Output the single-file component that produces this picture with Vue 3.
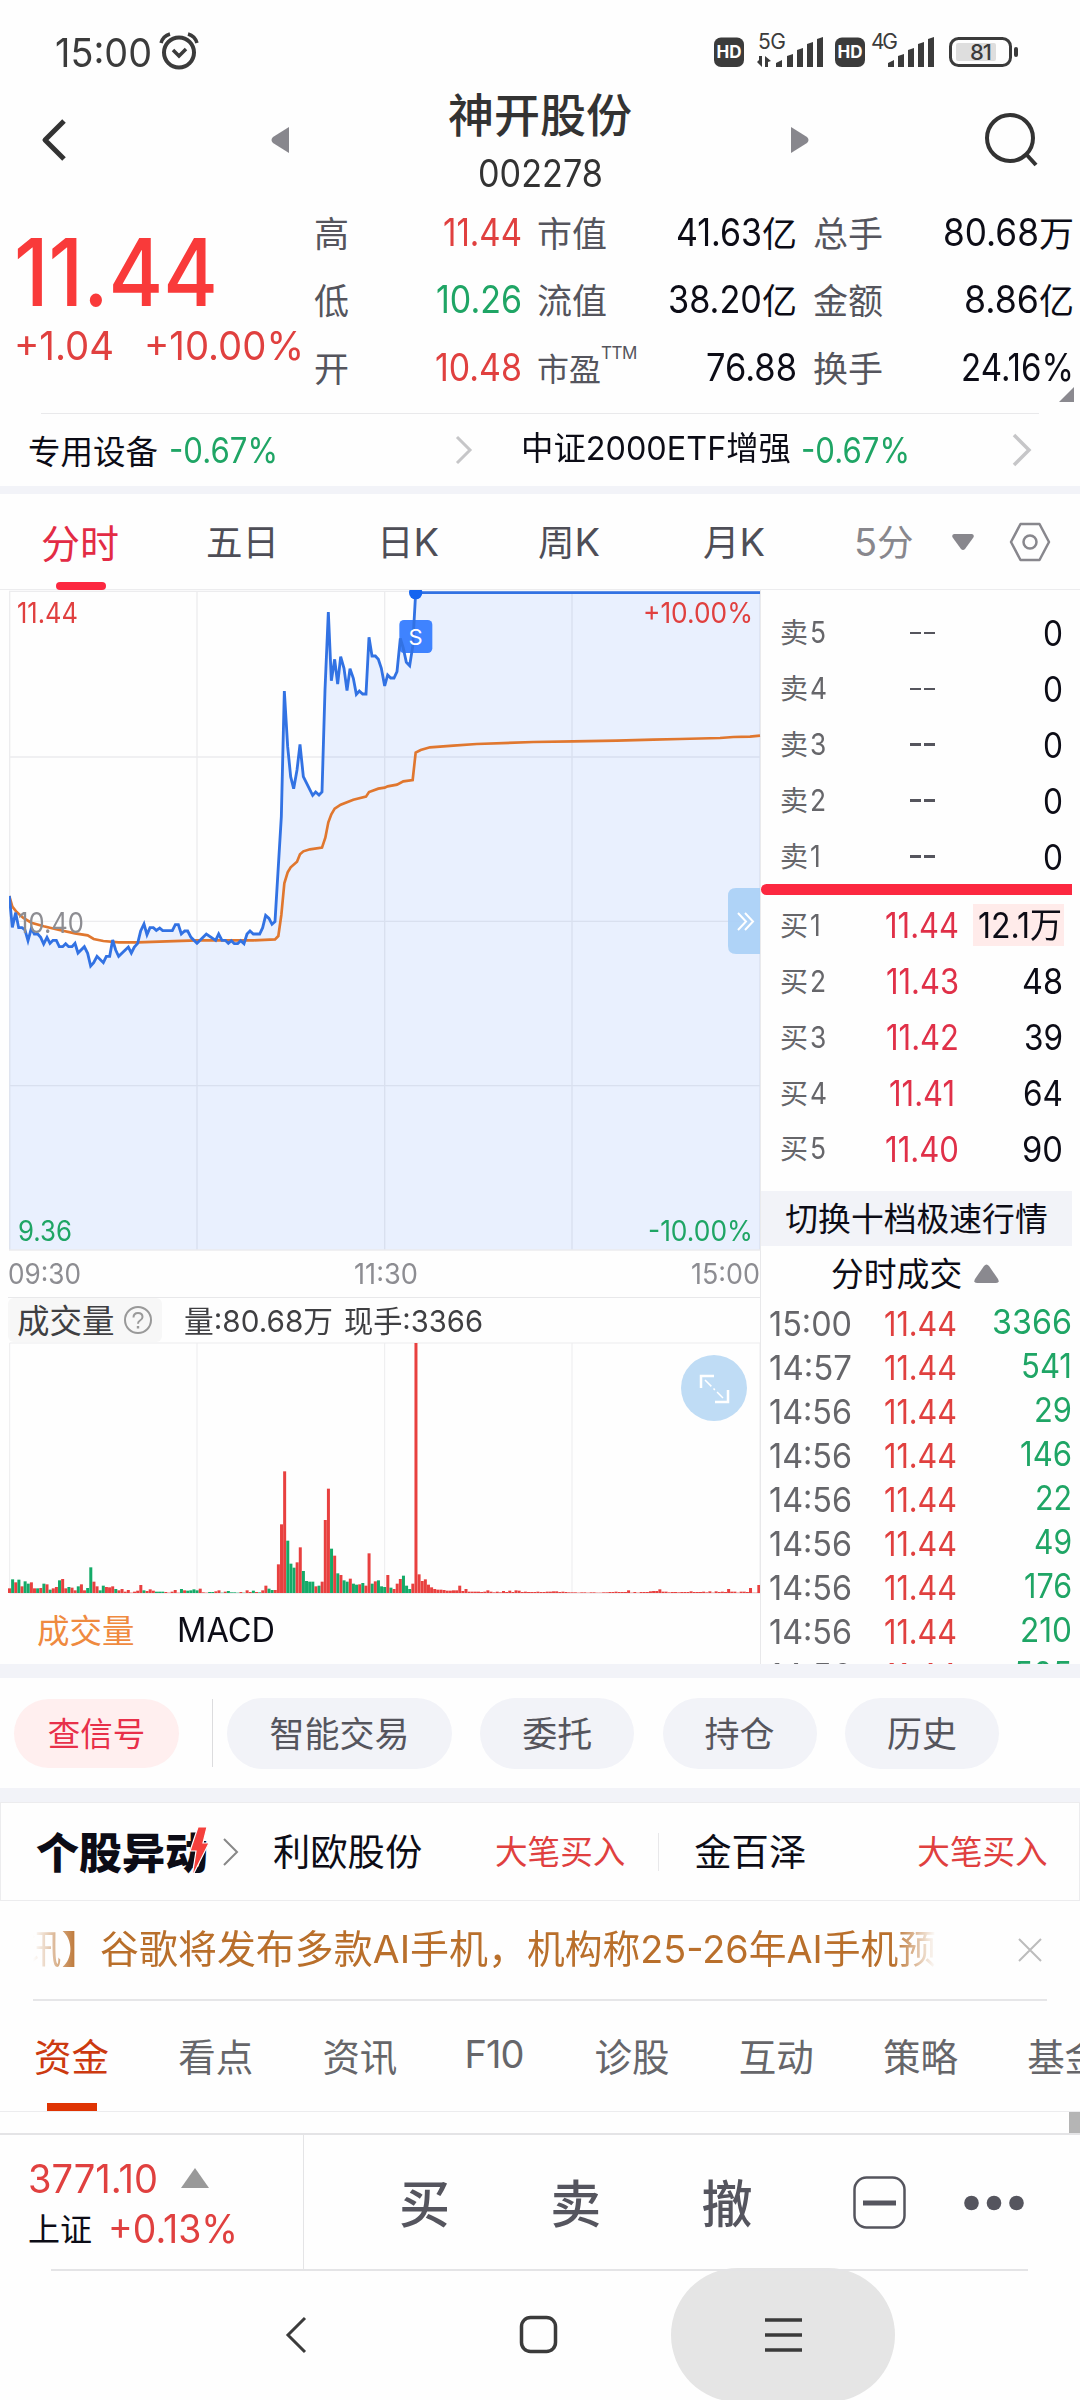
<script setup>
// Scales a label horizontally so that it takes exactly the given width in its row.
const vFit = {
  mounted(el, { value }) {
    const natural = el.getBoundingClientRect().width
    el.style.transform = `scaleX(${value / natural})`
    el.style.marginRight = `${value - natural}px`
  },
}

const stats = [
  ['高', '11.44', 'red', 79, '市值', '41.63', '亿', 86, '总手', '80.68', '万', 96],
  ['低', '10.26', 'green', 86, '流值', '38.20', '亿', 94, '金额', '8.86', '亿', 75],
  ['开', '10.48', 'red', 87, '市盈', '76.88', '', 91, '换手', '24.16%', '', 113],
]

const sells = ['卖5', '卖4', '卖3', '卖2', '卖1']
const buys = [
  ['买1', '11.44', 74, '12.1万', 84],
  ['买2', '11.43', 73, '48', 41],
  ['买3', '11.42', 73, '39', 39],
  ['买4', '11.41', 66, '64', 40],
  ['买5', '11.40', 74, '90', 41],
]
const trades = [
  ['15:00', '3366', 80],
  ['14:57', '541', 51],
  ['14:56', '29', 38],
  ['14:56', '146', 52],
  ['14:56', '22', 37],
  ['14:56', '49', 38],
  ['14:56', '176', 48],
  ['14:56', '210', 52],
  ['14:56', '505', 58],
]

const price =
  '28,948 37,1042 47,998 56,1043 66,1043 75,1050 84,1082 94,1045 103,1062 113,1062 122,1072 131,1092 141,1072 150,1090 159,1081 169,1081 178,1100 188,1100 197,1091 206,1100 216,1100 225,1090 234,1119 253,1100 263,1120 272,1158 281,1148 291,1129 310,1148 319,1129 329,1129 338,1080 347,1110 356,1129 385,1101 394,1119 403,1101 413,1090 422,1053 432,1032 441,1064 450,1043 460,1043 469,1051 479,1044 488,1052 517,1052 526,1034 535,1034 544,1062 554,1053 563,1053 573,1072 591,1090 619,1062 647,1081 656,1062 666,1081 676,1081 685,1090 694,1082 703,1091 713,1091 722,1082 732,1091 741,1062 750,1053 760,1062 779,1062 788,1043 797,1006 807,1015 816,1033 825,1025 844,710 853,333 863,500 872,590 881,626 891,570 900,493 910,590 938,646 947,636 957,645 966,636 975,330 985,96 994,302 1004,238 1013,312 1022,230 1032,265 1041,332 1050,266 1060,295 1069,343 1078,333 1088,342 1098,342 1107,172 1116,228 1126,228 1135,238 1144,265 1154,318 1163,285 1172,294 1182,294 1191,275 1201,175 1210,205 1219,247 1229,257 1238,200 1247,38 2280,38'
const average =
  '28,948 37,980 50,996 70,1014 94,1028 131,1039 178,1050 225,1060 263,1066 281,1077 310,1083 356,1087 413,1087 500,1084 591,1081 760,1081 825,1078 835,1068 844,1005 853,910 863,877 872,862 891,845 900,823 910,814 930,808 966,803 976,773 985,727 994,703 1004,686 1022,674 1060,659 1098,650 1107,636 1135,626 1154,623 1163,619 1191,614 1210,604 1238,600 1247,518 1262,510 1290,502 1360,497 1430,492 1600,486 1720,484 1850,482 1960,479 2040,477 2160,474 2200,471 2250,470 2280,467'

// One entry per minute: r = rising, g = falling, then the bar height.
const volume = (
  'r14 g41 r32 g40 r20 g35 g28 r32 r14 g14 r15 g28 r26 g10 r14 r18 g38 r42 r14 g18 r16 r8 g20 r26 r8 g15 g77 r34 r20 g8 g22 r18 r17 r20 g12 r8 r12 r4 r9 r1 r4 r7 r24 g8 r6 r11 r7 g4 g4 g4 ' +
  'r3 r1 r4 r9 r1 g12 r8 g7 g8 g11 g8 r13 r2 r1 g3 g3 r5 r8 g1 r4 g6 g2 g2 g1 r3 g1 r8 r3 g7 r3 g2 r8 r22 g13 g9 r9 r86 r206 r365 g157 g88 g76 r92 r137 g66 g36 g34 g34 r20 g22 ' +
  'r34 r219 r313 g133 r112 g59 r54 g38 g34 r43 g28 g25 r26 g30 r22 r119 g28 r35 g38 g20 g18 r54 g16 r12 r28 r42 g52 g22 g12 r28 r750 r56 r36 r41 r25 r17 r12 r10 r10 r9 r7 r7 r8 r8 r22 r6 r12 r4 r4 r4 ' +
  'r4 r3 r4 r8 r4 r2 r4 r2 r6 r3 r7 r3 r8 r7 r3 r4 r3 r3 r3 r4 r3 r3 r4 r4 r5 r5 r3 r4 r3 r2 r2 r2 r1 r2 r2 r1 r2 r2 r1 r1 r2 r2 r3 r3 r4 r3 r3 r3 r8 r1 ' +
  'r3 r1 r3 r3 r3 r5 r6 r6 r11 r4 r4 r2 r3 r3 r2 r3 r3 r3 r5 r3 r3 r3 r4 r2 r5 r1 r5 r3 r4 r3 r12 r4 r4 r1 r4 r4 r3 r15 r1 r1 r24'
)
  .split(' ')
  .map((s, i, all) => ({
    x: i === all.length - 1 ? 2272 : 24 + i * 9.38,
    h: Number(s.slice(1)),
    fill: s[0] === 'r' ? '#e8403f' : '#14aa68',
  }))
</script>

<template>
  <div class="screen">
    <div class="status">
      <span class="n clock" v-fit="97">15:00</span>
      <svg class="alarm" width="42" height="40" viewBox="0 0 42 40" fill="none" stroke="#3b3b3b">
        <circle cx="21" cy="21.500" r="15" stroke-width="4" />
        <path d="M3 12Q5 5 12 3M39 12Q37 5 30 3" stroke-width="3.500" />
        <path d="M15 19l6 6 7-7" stroke-width="3.500" />
      </svg>
      <svg width="306" height="56" viewBox="713 24 306 56" fill="#3b3b3b">
        <rect x="714" y="37.500" width="30" height="29.500" rx="7" />
        <text x="729" y="58" class="hd">HD</text>
        <text x="758" y="48.500" class="gen" textLength="28">5G</text>
        <path d="M759 56h3v11l-5-5 2-2zM768 67h-3V56l6 5-3 1z" />
        <path d="M776 63l6-3v7h-6zM787 56l6-2v13h-6zM797 50l6-2v19h-6zM807 44l6-2v25h-6zM817 39l6-2v30h-6z" />
        <rect x="835" y="37.500" width="30" height="29.500" rx="7" />
        <text x="850" y="58" class="hd">HD</text>
        <text x="871" y="48.500" class="gen" textLength="27">4G</text>
        <path d="M888 63l6-3v7h-6zM898 56l6-2v13h-6zM908 50l6-2v19h-6zM918 44l6-2v25h-6zM928 39l6-2v30h-6z" />
        <rect x="950.500" y="38.500" width="60" height="27" rx="8" fill="none" stroke="#3b3b3b" stroke-width="3" />
        <rect x="956" y="43" width="40" height="18" rx="2" fill="#dedede" />
        <text x="980.500" y="60" class="pct">81</text>
        <rect x="1014" y="47" width="4" height="10" rx="2" />
      </svg>
    </div>

    <header class="header">
      <svg width="30" height="44" viewBox="0 0 30 44" fill="none" stroke="#333" stroke-width="5"><path d="M25 3L6 22l19 19" stroke-linejoin="round" /></svg>
      <svg class="prev" width="18" height="26" viewBox="0 0 18 26"><path d="M18 0v26L2 16q-3-3 0-6z" fill="#88878d" /></svg>
      <div class="title">
        <h1>神开股份</h1>
        <span class="n" v-fit="125">002278</span>
      </div>
      <svg class="next" width="18" height="26" viewBox="0 0 18 26"><path d="M0 0v26l16-10q3-3 0-6z" fill="#88878d" /></svg>
      <svg class="search" width="54" height="54" viewBox="0 0 54 54" fill="none" stroke="#333" stroke-width="4"><circle cx="26" cy="25" r="23" /><path d="M42 41l10 11" /></svg>
    </header>

    <section class="quote">
      <div class="last">
        <div class="n big" v-fit="204">11.44</div>
        <div class="chg"><span class="n" v-fit="100">+1.04</span><span class="n pctv" v-fit="160">+10.00%</span></div>
      </div>
      <div class="stats">
        <div v-for="s in stats" :key="s[0]" class="stat">
          <span class="lab l1">{{ s[0] }}</span>
          <span class="val v1" :class="s[2]"><span class="n" v-fit="s[3]">{{ s[1] }}</span></span>
          <span class="lab l2" :class="{ pe: s[0] === '开' }">{{ s[4] }}<sup v-if="s[0] === '开'" class="n">TTM</sup></span>
          <span class="val v2"><span class="n" v-fit="s[7]">{{ s[5] }}</span><i v-if="s[6]">{{ s[6] }}</i></span>
          <span class="lab l3">{{ s[8] }}</span>
          <span class="val v3"><span class="n" v-fit="s[11]">{{ s[9] }}</span><i v-if="s[10]">{{ s[10] }}</i></span>
        </div>
      </div>
    </section>
    <div class="corner"><svg width="15" height="15"><path d="M15 0v15H0z" fill="#8a898f" /></svg></div>

    <div class="sectors">
      <span class="name">专用设备</span>
      <span class="n green d1" v-fit="109">-0.67%</span>
      <svg class="c1" width="18" height="30" viewBox="0 0 18 30" fill="none" stroke="#c6c6c8" stroke-width="3"><path d="M2 2l13 13L2 28" /></svg>
      <span class="name"><span v-fit="270">中证2000ETF增强</span></span>
      <span class="n green d2" v-fit="109">-0.67%</span>
      <svg class="c2" width="20" height="34" viewBox="0 0 20 34" fill="none" stroke="#c6c6c8" stroke-width="3.500"><path d="M2 2l15 15L2 32" /></svg>
    </div>
    <div class="band b8"></div>

    <nav class="periods">
      <span class="p on">分时</span>
      <span class="p">五日</span>
      <span class="p">日<b>K</b></span>
      <span class="p">周<b>K</b></span>
      <span class="p">月<b>K</b></span>
      <span class="p dim"><b>5</b>分</span>
      <svg class="down" width="22" height="16" viewBox="0 0 22 16"><path d="M2 0h18q3 1 1 4l-8 11q-2 2-4 0L1 4Q-1 1 2 0z" fill="#88878d" /></svg>
      <svg class="hex" width="42" height="40" viewBox="0 0 42 40" fill="none" stroke="#88878d" stroke-width="2.500" stroke-linejoin="round"><path d="M11.500 2h19L40 20l-9.500 18h-19L2 20z" /><circle cx="21" cy="20" r="6.500" /></svg>
    </nav>

    <main class="board">
      <div class="charts">
        <div class="plot">
          <svg width="752" height="661" viewBox="27 30 2256 1983">
            <g stroke="#ececee" stroke-width="4" fill="none">
              <path d="M29 34H2280V2010H29z" />
              <path d="M591 34V2010M1154 34V2010M1716 34V2010M28 531H2280M28 1024H2280M28 1517H2280" />
            </g>
            <polygon :points="`${price} 2280,2008 28,2008`" fill="#3c82ff" fill-opacity="0.11" />
            <polyline :points="average" fill="none" stroke="#e0772f" stroke-width="8" />
            <rect x="1198" y="120" width="99" height="99" rx="14" fill="#3f83ff" />
            <polyline :points="price" fill="none" stroke="#3272e3" stroke-width="8.500" />
            <circle cx="1247" cy="38" r="20" fill="#1565f0" />
            <text x="1247" y="194" class="smark">S</text>
          </svg>
          <span class="tag tl red"><span class="n" v-fit="61">11.44</span></span>
          <span class="tag tr red"><span class="n" v-fit="110">+10.00%</span></span>
          <span class="tag ml"><span class="n" v-fit="66">10.40</span></span>
          <span class="tag bl green"><span class="n" v-fit="54">9.36</span></span>
          <span class="tag br green"><span class="n" v-fit="105">-10.00%</span></span>
          <svg class="fold" width="32" height="66" viewBox="0 0 32 66"><path d="M32 0H8Q0 0 0 8v50q0 8 8 8h24z" fill="#a9cff6" fill-opacity=".9" /><path d="M10 25l8 8.500-8 8.500M17 25l8 8.500-8 8.500" fill="none" stroke="#fff" stroke-width="2" /></svg>
        </div>
        <div class="times"><span class="n" v-fit="73">09:30</span><span class="n" v-fit="64">11:30</span><span class="n" v-fit="69">15:00</span></div>
        <div class="volhead">
          <span class="volname"><em>成交量</em>
            <svg width="28" height="28" viewBox="0 0 28 28" fill="none" stroke="#999"><circle cx="14" cy="14" r="13" stroke-width="2" /><path d="M9.500 11.500q0-4.500 4.500-4.500t4.500 4q0 2-2.500 3.500-2 1.200-2 3.200" stroke-width="2" /><path d="M14 20v2.500" stroke-width="2.400" /></svg>
          </span>
          <span class="voltext" v-fit="149">量:80.68万</span>
          <span class="voltext vt2" v-fit="139">现手:3366</span>
        </div>
        <div class="volume">
          <svg width="752" height="252" viewBox="24 428 2256 756">
            <path d="M29 431H2280M29 431V1182H2280V431M591 431V1182M1154 431V1182M1716 431V1182" stroke="#ececee" stroke-width="3" fill="none" />
            <rect v-for="(b, i) in volume" :key="i" :x="b.x" :y="1181 - b.h" width="9" :height="b.h" :fill="b.fill" />
          </svg>
          <svg class="expand" width="66" height="66" viewBox="0 0 66 66"><circle cx="33" cy="33" r="33" fill="#bfdcf5" /><path d="M20 33V21h13M47 35v12H34" fill="none" stroke="#fff" stroke-width="2.500" /><path d="M24 25l18 18" stroke="#fff" stroke-width="1.500" stroke-dasharray="9 3 2 3" /></svg>
        </div>
        <div class="inds"><span class="on">成交量</span><span class="n" v-fit="98">MACD</span></div>
      </div>

      <aside class="book">
        <div v-for="s in sells" :key="s" class="lv">
          <span class="k">{{ s[0] }}<b>{{ s[1] }}</b></span>
          <span class="dash"><i></i><i></i></span>
          <span class="q"><span class="n" v-fit="20">0</span></span>
        </div>
        <div class="mid"></div>
        <div v-for="b in buys" :key="b[0]" class="lv">
          <span class="k">{{ b[0][0] }}<b>{{ b[0][1] }}</b></span>
          <span class="pr"><span class="n" v-fit="b[2]">{{ b[1] }}</span></span>
          <span class="q" :class="{ hot: b[0] === '买1' }"><span class="n" v-fit="b[4]">{{ b[3] }}</span></span>
        </div>
        <div class="switch">切换十档极速行情</div>
        <div class="tickhead">分时成交<svg width="25" height="19" viewBox="0 0 25 19"><path d="M10 2q2.500-3 5 0l9 13q2 4-2 4H3q-4 0-2-4z" fill="#8a898f" /></svg></div>
        <div class="ticks">
          <div v-for="(t, i) in trades" :key="i" class="tick">
            <span class="tm"><span class="n" v-fit="83">{{ t[0] }}</span></span>
            <span class="tp"><span class="n" v-fit="73">11.44</span></span>
            <span class="tv"><span class="n" v-fit="t[2]">{{ t[1] }}</span></span>
          </div>
        </div>
      </aside>
    </main>
    <div class="band b14"></div>

    <div class="actions">
      <span class="pill hotpill">查信号</span>
      <i class="sep"></i>
      <span class="pill wide">智能交易</span>
      <span class="pill">委托</span>
      <span class="pill">持仓</span>
      <span class="pill">历史</span>
    </div>
    <div class="band b14"></div>

    <div class="moves">
      <span class="logo"><span v-fit="172">个股异动</span>
        <svg class="bolt" width="20" height="50" viewBox="0 0 20 50"><path d="M9 0h9l-4 16h6L3 50l4-26H1z" fill="#f5403c" stroke="#fff" stroke-width="1.200" /></svg>
      </span>
      <svg class="mchev" width="16" height="28" viewBox="0 0 16 28" fill="none" stroke="#888" stroke-width="2"><path d="M1 1l13 13L1 27" /></svg>
      <span class="stock s1">利欧股份</span><span class="kind">大笔买入</span>
      <i class="vline"></i>
      <span class="stock s2">金百泽</span><span class="kind">大笔买入</span>
    </div>

    <div class="news">
      <div class="marquee"><span class="cut">讯】</span><span v-fit="427">谷歌将发布多款AI手机，</span><span v-fit="409">机构称25-26年AI手机预</span></div>
      <svg width="24" height="24" viewBox="0 0 24 24" stroke="#bcbcbc" stroke-width="2"><path d="M1 1l22 22M23 1L1 23" /></svg>
    </div>

    <nav class="infotabs">
      <span class="on">资金</span><span>看点</span><span>资讯</span><span class="n f10">F10</span><span>诊股</span><span>互动</span><span>策略</span><span>基金</span>
    </nav>
    <div class="peek"><i></i></div>

    <footer class="trade">
      <div class="index">
        <div><span class="n red" v-fit="130">3771.10</span><svg width="28" height="20"><path d="M14 0l14 20H0z" fill="#999" /></svg></div>
        <div><span class="iname">上证</span><span class="n red" v-fit="130">+0.13%</span></div>
      </div>
      <span class="op">买</span><span class="op">卖</span><span class="op">撤</span>
      <svg class="box" width="54" height="54" viewBox="0 0 54 54" fill="none" stroke="#55555e"><rect x="1.500" y="1.500" width="50" height="50" rx="12" stroke-width="2.500" /><path d="M10 27h33" stroke-width="5" /></svg>
      <svg class="dots" width="60" height="16" fill="#55555e"><circle cx="7.500" cy="8" r="7.300" /><circle cx="30" cy="8" r="7.300" /><circle cx="52.500" cy="8" r="7.300" /></svg>
    </footer>

    <div class="sysnav">
      <svg class="nb" width="22" height="38" viewBox="0 0 22 38" fill="none" stroke="#3b3b3b" stroke-width="3"><path d="M20 2L3 19l17 17" /></svg>
      <svg class="nh" width="40" height="40" viewBox="0 0 40 40" fill="none" stroke="#3b3b3b" stroke-width="3.500"><rect x="2.500" y="2.500" width="34" height="34" rx="9" /></svg>
      <div class="recent"><svg width="37" height="36" stroke="#3b3b3b" stroke-width="3.500"><path d="M0 3h37M0 18h37M0 33h37" /></svg></div>
    </div>
  </div>
</template>

<style>
body { background: #fff; }
</style>

<style scoped>
.screen { width: 1080px; height: 2400px; background: #fefefe; overflow: hidden; font-family: 'Noto Sans CJK SC', sans-serif; color: #0c0c16; display: flex; flex-direction: column; box-sizing: border-box; }
.screen > * { flex: none; }
.n { font-family: Inter, sans-serif; }
span { display: inline-block; white-space: nowrap; transform-origin: left center; }
i, em { font-style: normal; }
b { font-weight: 400; font-family: Inter, 'Noto Sans CJK SC', sans-serif; display: inline-block; }
svg { display: block; flex: none; }
.red { color: #e0403f; }
.green { color: #1fa565; }

.status { height: 104px; display: flex; align-items: center; padding-left: 55px; box-sizing: border-box; color: #3b3b3b; }
.clock { font-size: 39px; }
.alarm { margin: -2px 513px 0 6px; }
.hd { font: 700 17px Inter, sans-serif; fill: #fff; text-anchor: middle; }
.gen { font: 400 21px Inter, sans-serif; }
.pct { font: 500 22px Inter, sans-serif; text-anchor: middle; letter-spacing: -1px; }

.header { height: 96px; margin-top: -12px; display: flex; align-items: center; padding: 0 41px 0 39px; color: #333; }
.prev { margin-left: 202px; }
.title { width: 502px; display: flex; flex-direction: column; align-items: center; padding-top: 5px; }
.title h1 { margin: 0; font-size: 46px; font-weight: 500; line-height: 50px; }
.title span { font-size: 38px; line-height: 50px; margin: 11px 2px 0 0; }
.search { margin-left: 175px; }

.quote { height: 206px; display: flex; margin-top: 11px; }
.last { width: 315px; padding: 26px 0 0 14px; box-sizing: border-box; }
.big { display: inline-block; transform-origin: left center; font-size: 93px; font-weight: 500; line-height: 94px; color: #f93a3a; }
.chg { display: flex; color: #e0403f; font-size: 40px; line-height: 48px; margin-top: 3px; }
.pctv { margin-left: 30px; }
.stats { flex: 1; margin: -1px 0 0 -1px; }
.stat { height: 67.500px; display: flex; align-items: center; font-size: 35px; line-height: 60px; }
.lab { color: #55555d; }
.l1 { width: 56px; }
.l2 { width: 112px; margin-left: 15px; }
.pe { font-size: 32px; }
.l3 { width: 100px; margin-left: 16px; }
.val { display: flex; justify-content: flex-end; align-items: center; }
.val .n { font-size: 38px; line-height: 60px; }
.v1 { width: 152px; }
.v2 { width: 148px; }
.v3 { width: 161px; }
.l2 sup { font-size: 17px; line-height: 18px; vertical-align: 22px; letter-spacing: -.5px; }
.corner { height: 15px; display: flex; padding-left: 1059px; margin-top: -18px; margin-bottom: 5px; }

.sectors { height: 72px; margin: 6px 41px 0; border-top: 1px solid #e9e9eb; display: flex; align-items: center; font-size: 32.500px; }
.name { margin-left: -13px; line-height: 50px; padding-bottom: 1px; }
.d1, .d2 { font-size: 35px; }
.d1 { margin-left: 11px; }
.c1 { margin: 0 0 0 177px; }
.c1 + .name { margin-left: 48px; font-family: Inter, 'Noto Sans CJK SC', sans-serif; padding-bottom: 2px; }
.d2 { margin-left: 10px; }
.c2 { margin-left: 102px; }
.band { background: #f2f3f8; }
.b8 { height: 8px; }
.b14 { height: 14px; }

.periods { height: 96px; box-sizing: border-box; display: flex; align-items: center; padding-left: 41px; font-size: 36.500px; color: #4e4e57; }
.p { position: relative; line-height: 58px; padding-bottom: 2px; width: 165px; }
.p b { font-size: 38px; line-height: 58px; }
.periods .p:nth-child(2) { width: 171px; }
.periods .p:nth-child(3) { width: 161px; }
.periods .p:nth-child(5) { width: 151px; }
.p.on { color: #e32b45; font-size: 39px; }
.p.on::after { content: ''; position: absolute; left: 15px; bottom: -18px; width: 50px; height: 8px; border-radius: 4px; background: #fc2840; }
.p.dim { width: 98px; color: #88878d; }
.hex { margin-left: 35px; }

.board { height: 1075px; display: flex; border-top: 1px solid #ececee; margin-top: -1px; box-sizing: border-box; overflow: hidden; }
.charts { width: 761px; border-right: 1px solid #e8e8ea; box-sizing: border-box; }
.plot { position: relative; padding-left: 9px; height: 661px; }
.smark { font: 400 66px Inter, sans-serif; fill: #fff; text-anchor: middle; }
.tag { position: absolute; font-size: 28px; line-height: 34px; }
.tl { left: 17px; top: 4px; }
.tr { right: 7px; top: 4px; }
.ml { left: 18px; top: 314px; color: #8d8d92; }
.bl { left: 18px; top: 622px; }
.br { right: 7px; top: 622px; }
.fold { position: absolute; right: 0; top: 298px; }
.times { display: flex; justify-content: space-between; padding: 0 0 0 8px; height: 46px; align-items: center; font-size: 28px; color: #8d8d92; }
.volhead { height: 45px; margin-left: 8px; border-top: 1px solid #e8e8ea; display: flex; align-items: center; color: #3f3f42; box-sizing: border-box; }
.volname { display: flex; align-items: center; width: 154px; height: 44px; box-sizing: border-box; padding-left: 9px; background: #f7f7f7; border-radius: 6px; font-size: 32.500px; line-height: 42px; }
.volname em { padding-bottom: 2px; }
.volname svg { margin-left: 9px; }
.voltext { margin-left: 22px; font-size: 30px; font-family: Inter, 'Noto Sans CJK SC', sans-serif; padding-bottom: 3px; }
.vt2 { margin-left: 11px; }
.volume { position: relative; padding-left: 8px; height: 252px; }
.expand { position: absolute; left: 681px; top: 13px; }
.inds { display: flex; align-items: center; height: 70px; padding-left: 37px; font-size: 32.500px; }
.inds .on { color: #ef8a3f; margin-right: 42px; padding-bottom: 2px; }
.inds .n { font-size: 34px; }

.book { width: 311px; padding-top: 15px; }
.lv { height: 55.900px; display: flex; align-items: center; position: relative; }
.k { width: 86px; margin-left: 19px; font-size: 28px; color: #66666a; line-height: 48px; padding-bottom: 2px; }
.k b { font-size: 30px; margin-left: 2px; transform: scaleX(.88); transform-origin: left; }
.dash { width: 112px; display: flex; justify-content: center; gap: 3px; }
.dash i { width: 11px; height: 2.500px; background: #55555d; }
.pr { width: 112px; color: #e03048; font-size: 35px; display: flex; justify-content: center; }
.q { width: 85px; display: flex; justify-content: flex-end; font-size: 35px; }
.q .n { font-family: Inter, 'Noto Sans CJK SC', sans-serif; line-height: 42px; }
.hot { background: #ffebea; width: 91px; margin-left: -5px; padding-right: 2px; box-sizing: border-box; }
.mid { height: 11px; border-radius: 6px 0 0 6px; background: #fc2840; margin-bottom: 2px; }
.switch { height: 55px; box-sizing: border-box; padding-bottom: 3px; margin-top: 14px; background: #f2f3f8; display: flex; align-items: center; justify-content: center; font-size: 32.800px; }
.tickhead { height: 54px; box-sizing: border-box; padding-bottom: 2px; display: flex; align-items: center; padding-left: 70px; font-size: 32.800px; }
.tickhead svg { margin: 3px 0 0 12px; }
.ticks { height: 400px; overflow: hidden; }
.tick { height: 43.950px; display: flex; align-items: center; font-size: 34px; }
.tm { width: 115px; margin-left: 8px; color: #66666a; }
.tp { width: 80px; color: #e0403f; }
.tv { width: 108px; display: flex; justify-content: flex-end; color: #1fa565; }

.actions { height: 110px; display: flex; align-items: center; padding-left: 14px; }
.pill { height: 71px; box-sizing: border-box; border-radius: 36px; background: #f2f3f8; color: #55555d; font-size: 35px; line-height: 68px; width: 154px; text-align: center; margin-right: 28.300px; }
.wide { width: 225px; }
.hotpill { width: 165px; height: 69px; line-height: 66px; background: #ffefef; color: #e8304a; font-size: 32.500px; margin-right: 33px; }
.sep { width: 1px; height: 68px; background: #dcdcde; margin-right: 14px; }

.moves { height: 99px; border: 1px solid #ececee; box-sizing: border-box; display: flex; align-items: center; padding-left: 35px; }
.logo { position: relative; font-size: 43px; font-weight: 900; line-height: 56px; padding-bottom: 3px; width: 174px; }
.bolt { position: absolute; right: 1px; top: 5px; }
.mchev { margin-left: 13px; }
.stock { font-size: 37.300px; line-height: 58px; padding-bottom: 3px; }
.s1 { margin-left: 34px; width: 222px; }
.s2 { margin-left: 35px; width: 223px; }
.kind { font-size: 32.600px; color: #e0403f; line-height: 58px; padding-bottom: 3px; }
.vline { width: 1px; height: 38px; background: #e8e8ea; margin-left: 33px; }

.news { height: 98px; margin: 0 33px; border-bottom: 2px solid #e6e6e8; display: flex; align-items: center; }
.marquee { width: 903px; margin-right: 82px; padding-bottom: 2px; display: flex; overflow: hidden; font-size: 38.500px; line-height: 70px; color: #b96f2b; font-family: Inter, 'Noto Sans CJK SC', sans-serif; -webkit-mask-image: linear-gradient(90deg, transparent, #000 45px, #000 860px, transparent); mask-image: linear-gradient(90deg, transparent, #000 45px, #000 860px, transparent); }
.cut { margin-left: -10px; }

.infotabs { height: 111px; border-bottom: 1px solid #ececee; display: flex; align-items: center; padding-left: 34px; font-size: 37.500px; color: #66666a; box-sizing: border-box; overflow: hidden; }
.infotabs span { flex: none; width: 144.200px; line-height: 107px; padding-bottom: 3px; position: relative; }
.infotabs .f10 { width: 126px; margin: 0 2px 0 0; text-indent: -2px; font-size: 38px; letter-spacing: -1px; }
.infotabs .on { color: #cc3a10; }
.infotabs .on::after { content: ''; position: absolute; left: 13px; bottom: 0; width: 50px; height: 8px; background: #df3403; }
.peek { height: 23px; box-sizing: border-box; border-bottom: 2px solid #e4e4e6; display: flex; justify-content: flex-end; }
.peek i { width: 11px; background: #b5b5b5; }

.trade { height: 135px; display: flex; align-items: center; position: relative; }
.trade::after { content: ''; position: absolute; left: 51px; right: 52px; bottom: -1px; height: 2px; background: #e4e4e6; }
.index { width: 304px; height: 135px; box-sizing: border-box; border-right: 1px solid #e4e4e6; padding: 18px 0 0 28px; margin-right: 95px; }
.index div { display: flex; align-items: center; height: 50px; font-size: 39px; }
.index svg { margin-left: 23px; }
.iname { font-size: 32px; line-height: 46px; padding-bottom: 3px; margin-right: 16px; }
.op { font-size: 51px; font-weight: 500; color: #55555e; width: 151.200px; line-height: 66px; padding-bottom: 4px; }
.dots { margin-left: 57px; }

.sysnav { height: 130px; display: flex; align-items: center; }
.nb { margin-left: 285px; }
.nh { margin-left: 212px; }
.recent { width: 224px; height: 134px; border-radius: 67px; margin-left: 112px; background: #e5e5e5; display: flex; align-items: center; justify-content: center; }
</style>
